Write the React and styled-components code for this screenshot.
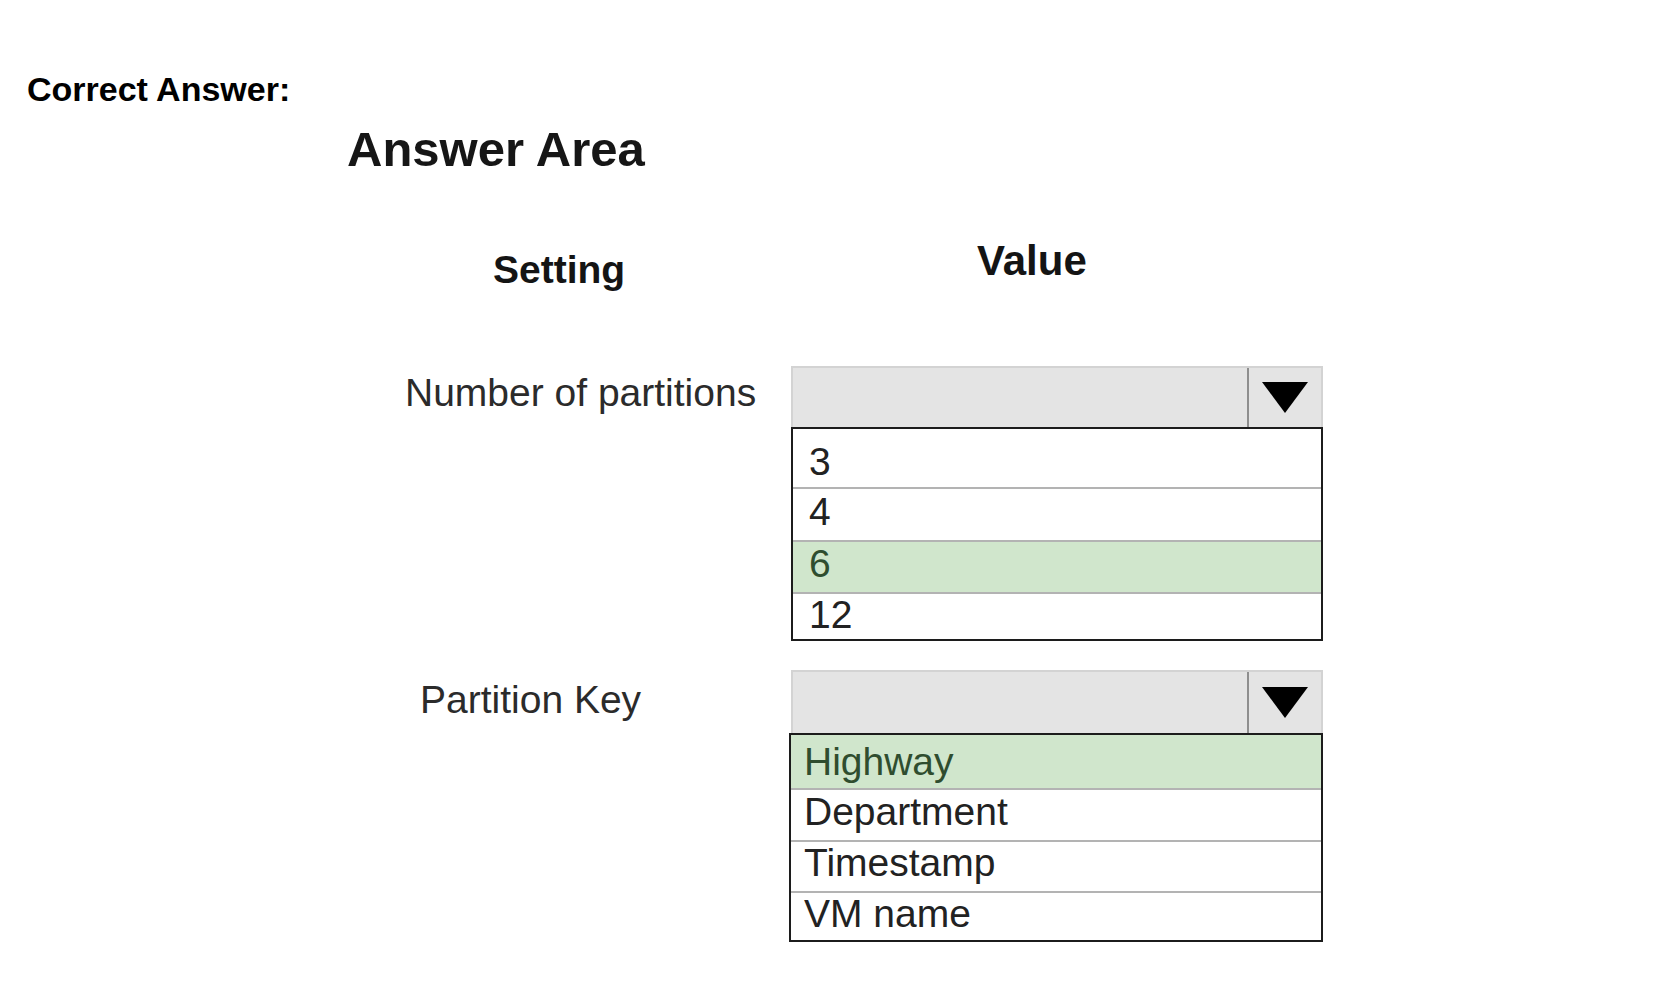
import React from "react";
import styled, { createGlobalStyle } from "styled-components";

const GlobalStyle = createGlobalStyle`
  body {
    margin: 0;
    background: #ffffff;
    font-family: "Liberation Sans", Arial, Helvetica, sans-serif;
  }
`;

const Page = styled.div`
  padding: 72px 0 40px 27px;
`;

const Heading = styled.h1`
  margin: 0;
  font-size: 34px;
  line-height: 34px;
  font-weight: bold;
  color: #000;
`;

const AnswerArea = styled.section`
  margin: 19px 0 0 320px;
  width: 976px;
`;

const Title = styled.h2`
  margin: 0;
  font-size: 49px;
  line-height: 49px;
  font-weight: bold;
  color: #161616;
`;

const Row = styled.div`
  display: grid;
  grid-template-columns: 444px 532px;
  align-items: start;
  margin-top: ${({ $gap }) => $gap}px;
`;

const ColHead = styled.div`
  padding-left: ${({ $indent }) => $indent}px;
  margin-top: ${({ $offset }) => $offset || 0}px;
  font-size: ${({ $size }) => $size}px;
  line-height: 1;
  font-weight: bold;
  color: #141414;
`;

const Label = styled.div`
  padding-left: ${({ $indent }) => $indent}px;
  margin-top: ${({ $offset }) => $offset}px;
  font-size: 39px;
  line-height: 1;
  color: #2b2b2b;
`;

const Dropdown = styled.div`
  display: flex;
  flex-direction: column;
`;

const Selector = styled.div`
  display: flex;
  height: ${({ $h }) => $h}px;
  background: #e4e4e4;
  border: 2px solid #d3d3d3;
  border-bottom: none;
  box-sizing: border-box;
`;

const SelectorField = styled.div`
  flex: 1;
`;

const ArrowCell = styled.div`
  width: 72px;
  border-left: 2px solid #8e8e8e;
  display: flex;
  align-items: center;
  justify-content: center;
`;

const OptionList = styled.ul`
  list-style: none;
  margin: 0 0 0 ${({ $bleed }) => -$bleed}px;
  padding: 0;
  border: 2px solid #1c1c1c;
  background: #fff;
`;

const Option = styled.li`
  box-sizing: border-box;
  height: ${({ $h }) => $h}px;
  padding: ${({ $pt }) => $pt}px 0 0 ${({ $pl }) => $pl}px;
  font-size: 39px;
  line-height: 1;
  color: ${({ $picked }) => ($picked ? "#2f4d2f" : "#222")};
  background: ${({ $picked }) => ($picked ? "#d0e6cc" : "#fff")};
  border-top: 2px solid #b3b3b3;

  &:first-child {
    border-top: none;
  }
`;

const Arrow = () => (
  <svg width="46" height="31" viewBox="0 0 46 31">
    <polygon points="0,0 46,0 23,31" fill="#000" />
  </svg>
);

const FIELDS = [
  {
    label: "Number of partitions",
    indent: 58,
    labelOffset: 7,
    gap: 77,
    header: 61,
    bleed: 0,
    pl: 16,
    options: [
      { text: "3", h: 58, pt: 13 },
      { text: "4", h: 53, pt: 3 },
      { text: "6", h: 52, pt: 2, picked: true },
      { text: "12", h: 47, pt: 1 },
    ],
  },
  {
    label: "Partition Key",
    indent: 73,
    labelOffset: 10,
    gap: 29,
    header: 63,
    bleed: 2,
    pl: 13,
    options: [
      { text: "Highway", h: 53, pt: 7, picked: true },
      { text: "Department", h: 52, pt: 2 },
      { text: "Timestamp", h: 51, pt: 1 },
      { text: "VM name", h: 49, pt: 1 },
    ],
  },
];

const App = () => {
  return (
    <>
      <GlobalStyle />
      <Page>
        <Heading>Correct Answer:</Heading>
        <AnswerArea>
          <Title>Answer Area</Title>
          <Row $gap={66}>
            <ColHead $indent={146} $offset={10} $size={39}>
              Setting
            </ColHead>
            <ColHead $indent={186} $size={42}>
              Value
            </ColHead>
          </Row>
          {FIELDS.map((field) => (
            <Row key={field.label} $gap={field.gap}>
              <Label $indent={field.indent} $offset={field.labelOffset}>
                {field.label}
              </Label>
              <Dropdown>
                <Selector $h={field.header}>
                  <SelectorField />
                  <ArrowCell>
                    <Arrow />
                  </ArrowCell>
                </Selector>
                <OptionList $bleed={field.bleed}>
                  {field.options.map((opt) => (
                    <Option
                      key={opt.text}
                      $h={opt.h}
                      $pt={opt.pt}
                      $pl={field.pl}
                      $picked={opt.picked}
                    >
                      {opt.text}
                    </Option>
                  ))}
                </OptionList>
              </Dropdown>
            </Row>
          ))}
        </AnswerArea>
      </Page>
    </>
  );
};

export default App;
